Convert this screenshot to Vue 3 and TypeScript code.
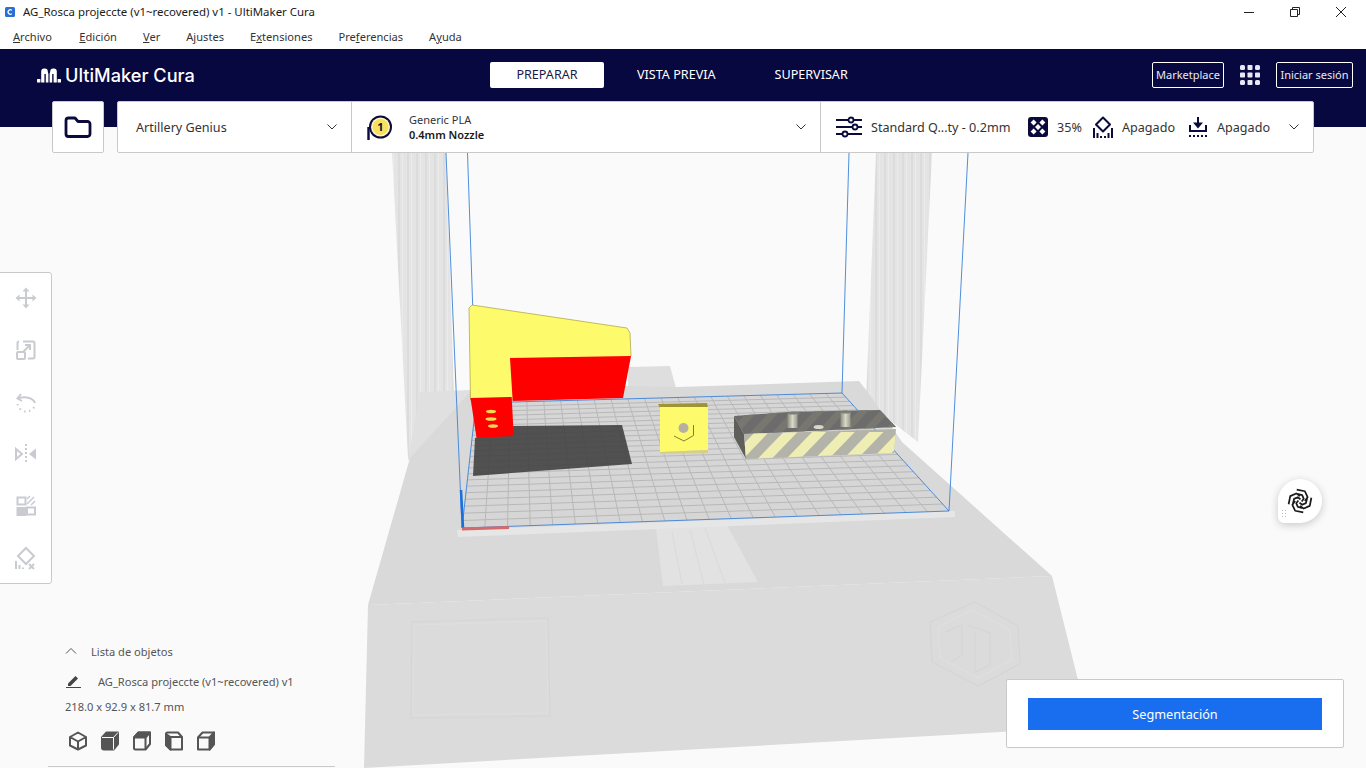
<script setup lang="ts">
// UltiMaker Cura "Preparar" stage: window chrome, toolbars and a fake 3D build plate.

type Pt = [number, number]

const menus = [
  { pre: '', key: 'A', post: 'rchivo' },
  { pre: '', key: 'E', post: 'dición' },
  { pre: '', key: 'V', post: 'er' },
  { pre: 'A', key: 'j', post: 'ustes' },
  { pre: 'E', key: 'x', post: 'tensiones' },
  { pre: 'Pre', key: 'f', post: 'erencias' },
  { pre: 'A', key: 'y', post: 'uda' },
]

// bed corners on screen: back-left, back-right, front-right, front-left
const bed: Pt[] = [
  [476, 403],
  [842, 393],
  [949, 511],
  [462, 528],
]

function project(u: number, v: number): Pt {
  const [[x0, y0], [x1, y1], [x2, y2], [x3, y3]] = bed
  const dx1 = x1 - x2
  const dx2 = x3 - x2
  const sx = x0 - x1 + x2 - x3
  const dy1 = y1 - y2
  const dy2 = y3 - y2
  const sy = y0 - y1 + y2 - y3
  const den = dx1 * dy2 - dx2 * dy1
  const g = (sx * dy2 - dx2 * sy) / den
  const h = (dx1 * sy - sx * dy1) / den
  const w = g * u + h * v + 1
  return [
    ((x1 - x0 + g * x1) * u + (x3 - x0 + h * x3) * v + x0) / w,
    ((y1 - y0 + g * y1) * u + (y3 - y0 + h * y3) * v + y0) / w,
  ]
}

const cells = 22
const gridLines: string[] = []
for (let i = 1; i < cells; i++) {
  const t = i / cells
  const a = project(t, 0)
  const b = project(t, 1)
  const c = project(0, t)
  const d = project(1, t)
  gridLines.push(`M${a[0].toFixed(1)} ${a[1].toFixed(1)}L${b[0].toFixed(1)} ${b[1].toFixed(1)}`)
  gridLines.push(`M${c[0].toFixed(1)} ${c[1].toFixed(1)}L${d[0].toFixed(1)} ${d[1].toFixed(1)}`)
}
const gridPath = gridLines.join('')
const bedPoints = bed.map((p) => p.join(',')).join(' ')

const frontStripes: string[] = []
for (let i = 0; i < 7; i++) {
  const x = 727 + i * 28.6
  frontStripes.push(`${x},461 ${x + 14},461 ${x + 42},432 ${x + 28},432`)
}
const topStripes: string[] = []
for (let i = 0; i < 9; i++) {
  const x = 725 + i * 22
  topStripes.push(`${x},436 ${x + 10},436 ${x + 36},408 ${x + 26},408`)
}
const swirl = [0, 90, 180, 270]
</script>

<template>
  <div class="app">
    <div class="titlebar">
      <svg class="app-icon" viewBox="0 0 10 10">
        <rect width="10" height="10" rx="1.5" fill="#2b6fd6" />
        <path d="M6.8 3.4A2.2 2.2 0 1 0 6.8 6.6" fill="none" stroke="#fff" stroke-width="1.2" />
      </svg>
      <span class="title">AG_Rosca projeccte (v1~recovered) v1 - UltiMaker Cura</span>
      <div class="winbtns">
        <svg width="12" height="12" viewBox="0 0 12 12"><path d="M1 6.5h10" stroke="#222" /></svg>
        <svg width="12" height="12" viewBox="0 0 12 12"><path d="M1.5 3.5h7v7h-7zM3.5 3.5v-2h7v7h-2" fill="none" stroke="#222" /></svg>
        <svg width="12" height="12" viewBox="0 0 12 12"><path d="M1 1l10 10M11 1L1 11" stroke="#222" /></svg>
      </div>
    </div>

    <nav class="menubar">
      <span v-for="m in menus" :key="m.post">{{ m.pre }}<u>{{ m.key }}</u>{{ m.post }}</span>
    </nav>

    <header class="header">
      <div class="topnav">
        <div class="brand">
          <svg width="24" height="15" viewBox="0 0 24 15" fill="#fff">
            <rect x="0" y="11" width="3.4" height="3.6" rx=".6" />
            <rect x="20.6" y="11" width="3.4" height="3.6" rx=".6" />
            <path d="M4.2 14.6V3.4A3 3 0 0 1 7.2.4h.6a3 3 0 0 1 3 3l.6 2.6V14.600H8.800V6H7.400V14.600z" />
            <path d="M12.600 14.600V6l.6-2.600a3 3 0 0 1 3-3h.6a3 3 0 0 1 3 3V14.600H16.600V6H15.200V14.600z" />
          </svg>
          <span>UltiMaker Cura</span>
        </div>
        <div class="tabs">
          <span class="tab active">PREPARAR</span>
          <span class="tab">VISTA PREVIA</span>
          <span class="tab">SUPERVISAR</span>
        </div>
        <div class="account">
          <span class="outline-btn market">Marketplace</span>
          <svg class="apps" width="20" height="20" viewBox="0 0 20 20" fill="#e8e8f4">
            <rect x="0" y="0" width="5" height="5" rx="1.6" />
            <rect x="7.5" y="0" width="5" height="5" rx=".8" />
            <rect x="15" y="0" width="5" height="5" rx="1.6" />
            <rect x="0" y="7.5" width="5" height="5" rx=".8" />
            <rect x="7.5" y="7.5" width="5" height="5" rx=".8" />
            <rect x="15" y="7.5" width="5" height="5" rx=".8" />
            <rect x="0" y="15" width="5" height="5" rx="1.6" />
            <rect x="7.5" y="15" width="5" height="5" rx=".8" />
            <rect x="15" y="15" width="5" height="5" rx="1.6" />
          </svg>
          <span class="outline-btn login">Iniciar sesión</span>
        </div>
      </div>

      <div class="toolrow">
        <div class="folder">
          <svg width="28" height="22" viewBox="0 0 28 22">
            <path d="M2 4.5A2.5 2.5 0 0 1 4.5 2h6.500l3 3.500h9.500A2.5 2.5 0 0 1 26 8v10a2.5 2.5 0 0 1-2.500 2.500h-19A2.5 2.5 0 0 1 2 18z" fill="none" stroke="#0a0a3c" stroke-width="2.8" stroke-linejoin="round" />
          </svg>
        </div>
        <div class="mainbar">
          <div class="section printer">
            <span>Artillery Genius</span>
            <svg class="chev" width="12" height="8" viewBox="0 0 12 8"><path d="M1.5 1.5L6 6l4.500-4.500" fill="none" stroke="#333" /></svg>
          </div>
          <div class="section material">
            <svg width="28" height="28" viewBox="0 0 28 28">
              <path d="M2.5 27V14" stroke="#0a0a3c" stroke-width="2.4" />
              <circle cx="14.5" cy="14" r="11.5" fill="#0a0a3c" />
              <circle cx="14.5" cy="14" r="9.5" fill="#fff6c4" />
              <circle cx="14.5" cy="14" r="8" fill="#f7e25e" />
              <text x="14.5" y="18" text-anchor="middle" class="nozzle-num">1</text>
            </svg>
            <div class="mat-text">
              <span>Generic PLA</span>
              <strong>0.4mm Nozzle</strong>
            </div>
            <svg class="chev" width="12" height="8" viewBox="0 0 12 8"><path d="M1.5 1.5L6 6l4.500-4.500" fill="none" stroke="#333" /></svg>
          </div>
          <div class="section settings">
            <svg width="26" height="22" viewBox="0 0 26 22" fill="none" stroke="#0a0a3c" stroke-width="1.8">
              <path d="M0 4h12M18 4h8M0 11h16M22 11h4M0 18h6M12 18h14" />
              <circle cx="15" cy="4" r="2.5" />
              <circle cx="19" cy="11" r="2.5" />
              <circle cx="9" cy="18" r="2.5" />
            </svg>
            <span class="profile">Standard Q...ty - 0.2mm</span>
            <svg class="infill" width="20" height="20" viewBox="0 0 20 20">
              <rect width="20" height="20" rx="3" fill="#0a0a3c" />
              <path d="M10 7l3 3-3 3-3-3zM5.600 2.600l3 3-3 3-3-3zM14.400 2.600l3 3-3 3-3-3zM5.600 11.400l3 3-3 3-3-3zM14.400 11.400l3 3-3 3-3-3z" fill="#fff" />
            </svg>
            <span class="pct">35%</span>
            <svg class="support" width="20" height="22" viewBox="0 0 20 22" fill="none" stroke="#0a0a3c" stroke-width="2">
              <path d="M10 1.500L17 8.500 10 15.500 3 8.500z" stroke-linejoin="round" />
              <path d="M1 22v-10M4.500 22v-5M8 22v-2M12 22v-2M15.500 22v-5M19 22v-10" />
            </svg>
            <span class="off">Apagado</span>
            <svg class="adhesion" width="20" height="22" viewBox="0 0 20 22" fill="none" stroke="#0a0a3c" stroke-width="2">
              <path d="M10 1v8" />
              <path d="M5 6.500h10L10 12.500z" fill="#0a0a3c" stroke="none" />
              <path d="M2 9v6h16V9" />
              <path d="M1 20h18" stroke-dasharray="2 2" />
            </svg>
            <span class="off">Apagado</span>
            <svg class="chev" width="12" height="8" viewBox="0 0 12 8"><path d="M1.5 1.5L6 6l4.500-4.500" fill="none" stroke="#333" /></svg>
          </div>
        </div>
      </div>
    </header>

    <main class="stage">
      <svg class="scene" viewBox="0 127 1366 641" width="1366" height="641">
        <defs>
          <pattern id="ribs" width="9" height="10" patternUnits="userSpaceOnUse">
            <rect width="9" height="10" fill="#e4e4e4" />
            <rect x="2" width="2" height="10" fill="#dcdcdc" />
            <rect x="6" width="1" height="10" fill="#ebebeb" />
          </pattern>
          <clipPath id="boxFront"><polygon points="744,434 896,429 894,453 746,459" /></clipPath>
          <clipPath id="boxTop"><polygon points="734,416 788,412 880,410 896,427 744,434" /></clipPath>
          <linearGradient id="peg" x1="0" x2="1" y1="0" y2="0">
            <stop offset="0" stop-color="#8d8d84" />
            <stop offset=".5" stop-color="#d9d9c4" />
            <stop offset="1" stop-color="#9a9a90" />
          </linearGradient>
        </defs>

        <!-- printer frame -->
        <polygon points="392,153 446,153 456,458 408,458" fill="url(#ribs)" />
        <polygon points="876,153 932,153 918,442 866,402" fill="url(#ribs)" />
        <polygon points="420,392 470,390 470,458 408,460" fill="#e0e0e0" />
        <polygon points="628,367 670,366 676,388 628,390" fill="#dedede" />
        <polygon points="470,392 627,386 677,387 859,381 870,395 902,442 1052,576 368,605 410,458" fill="#d9d9d9" />
        <polygon points="368,605 1052,576 1078,680 1090,727 364,768" fill="#dbdbdb" />
        <polygon points="656,528 727,525 758,582 663,586" fill="#e2e2e2" />
        <path d="M672 532l10 52M690 530l14 54M705 528l20 55" stroke="#dadada" stroke-width="1" fill="none" />
        <path d="M412 622L548 618L550 716L411 718Z" fill="none" stroke="#d5d5d5" />
        <path d="M414 625L546 621L548 713L413 715Z" fill="none" stroke="#dfdfdf" />
        <g fill="none" stroke="#d5d5d5" stroke-width="1.2">
          <path d="M975 602L1018 626L1020 664L978 686L932 662L930 622Z" />
          <path d="M972 610L1010 630L1012 660L978 678L940 658L938 627Z" stroke="#dfdfdf" />
          <path d="M946 632L962 625V655L951 662M968 625L990 633V665L975 672V632" />
        </g>

        <!-- bed -->
        <polygon points="457,530 955,511 955,517 458,537" fill="#e6e6e6" />
        <polygon :points="bedPoints" fill="#d6d6d6" />
        <path :d="gridPath" stroke="#b8b8b8" stroke-width="1" fill="none" />
        <polygon points="475,438 513,426 622,425 632,464 473,476" fill="#3f3f3f" fill-opacity=".88" />

        <!-- build volume -->
        <g stroke="#3b82d9" stroke-width=".9" fill="none">
          <path d="M446 153L462 528L949 511L968 153" />
          <path d="M467.5 153L476 403L842 393L849 153" />
          <path d="M842 393L949 511M476 403L462 528" />
        </g>
        <path d="M461 490L463 528" stroke="#1a6fdc" stroke-width="2.5" />
        <path d="M462 529L509 527.5" stroke="#d46a6a" stroke-width="3" />

        <!-- yellow and red part -->
        <polygon points="469,308 472,305 627,328 630,333 631,356 510,400 470.5,400" fill="#fdfb6b" stroke="#9a8f30" stroke-width=".6" />
        <polygon points="510,358 631,356 623,398 512.7,401" fill="#fe0000" />
        <polygon points="470.5,398 511.7,397 513.7,436 476.5,437.7" fill="#fe0000" />
        <ellipse cx="491" cy="411.5" rx="5" ry="1.8" fill="#f7d855" />
        <ellipse cx="491" cy="419" rx="5.5" ry="1.8" fill="#f7d855" />
        <ellipse cx="493" cy="426" rx="5" ry="1.8" fill="#f7d855" />

        <!-- yellow cube -->
        <polygon points="658,404 707,403 708,408 660,408" fill="#9f9430" />
        <polygon points="660,407 708,407 708,450 660,452" fill="#fdfb6b" />
        <polygon points="660,452 708,450 708,453 660,454" fill="#d8cf86" />
        <circle cx="683.5" cy="428" r="5" fill="#b5b1a0" />
        <path d="M674 436L684 441L693.5 435.5V425" fill="none" stroke="#85802c" />

        <!-- striped box -->
        <polygon points="734,416 744,434 746,459 734,437" fill="#5f5f5a" />
        <polygon points="734,416 788,412 880,410 896,427 744,434" fill="#6c6c6c" />
        <g clip-path="url(#boxTop)">
          <polygon v-for="s in topStripes" :key="s" :points="s" fill="#777770" />
        </g>
        <polygon points="744,434 896,429 894,453 746,459" fill="#b3b3aa" />
        <g clip-path="url(#boxFront)">
          <polygon v-for="s in frontStripes" :key="s" :points="s" fill="#eeeeb4" />
        </g>
        <rect x="787.5" y="413" width="10" height="15" fill="url(#peg)" />
        <ellipse cx="792.5" cy="413" rx="5" ry="1.5" fill="#7d7d78" />
        <rect x="840.5" y="412" width="10" height="15" fill="url(#peg)" />
        <ellipse cx="845.5" cy="412" rx="5" ry="1.5" fill="#7d7d78" />
        <ellipse cx="818.6" cy="427" rx="5" ry="2" fill="#d8d8c8" />
      </svg>

      <aside class="tools">
        <svg width="24" height="24" viewBox="0 0 24 24" fill="none" stroke="#c9cbd1" stroke-width="2">
          <path d="M12 3v18M3 12h18" />
          <path d="M12 1.5l3.500 4h-7zM12 22.500l3.500-4h-7zM1.500 12l4-3.500v7zM22.500 12l-4-3.500v7z" fill="#c9cbd1" stroke="none" />
        </svg>
        <svg width="24" height="24" viewBox="0 0 24 24" fill="none" stroke="#c9cbd1" stroke-width="2">
          <path d="M9 3.500h10A1.5 1.5 0 0 1 20.500 5v14a1.5 1.5 0 0 1-1.500 1.500h-5M3.500 12V5A1.5 1.5 0 0 1 5 3.500" />
          <rect x="3" y="14" width="8" height="7" rx="1" />
          <path d="M9 14l7-7M11 7h5v5" />
        </svg>
        <svg width="24" height="24" viewBox="0 0 24 24" fill="none" stroke="#c9cbd1" stroke-width="2">
          <path d="M7 4L3.500 8.500L8 11" />
          <path d="M4 8.500C11 6 19 7.500 21 13" />
          <path d="M3.500 14a9 9 0 0 0 17.500 1" stroke-dasharray="1.5 3.5" />
        </svg>
        <svg width="24" height="24" viewBox="0 0 24 24" fill="none" stroke="#c9cbd1" stroke-width="2">
          <path d="M12 2v20" stroke-dasharray="2 2" />
          <path d="M2 7l6 5-6 5z" />
          <path d="M22 6.500l-7 5.500 7 5.500z" fill="#c9cbd1" stroke="none" />
        </svg>
        <svg width="24" height="24" viewBox="0 0 24 24" fill="none" stroke="#c9cbd1" stroke-width="2">
          <rect x="3.5" y="3.5" width="8" height="7" />
          <rect x="13" y="13.5" width="8" height="7" />
          <rect x="2.5" y="13" width="10" height="9" fill="#c9cbd1" stroke="none" />
          <path d="M13 10l7-7M17 11l4-4M13 5l3-3" stroke-width="1.5" />
        </svg>
        <svg width="24" height="24" viewBox="0 0 24 24" fill="none" stroke="#c9cbd1" stroke-width="2">
          <path d="M12 2l8 8-8 8-8-8z" />
          <path d="M2 23v-8M5.500 23v-4M9 23v-1.500" />
          <path d="M15 18l5 5M20 18l-5 5" />
        </svg>
      </aside>

      <section class="objects">
        <div class="obj-head">
          <svg width="12" height="8" viewBox="0 0 12 8"><path d="M1 6.5L6 1.5l5 5" fill="none" stroke="#555" /></svg>
          <span>Lista de objetos</span>
        </div>
        <div class="obj-name">
          <svg width="15" height="14" viewBox="0 0 15 14">
            <path d="M2 9.500L9.500 2l2.500 2.500L4.500 12H2z" fill="#444" />
            <path d="M0 13.500h15" stroke="#444" />
          </svg>
          <span>AG_Rosca projeccte (v1~recovered) v1</span>
        </div>
        <div class="obj-size">218.0 x 92.9 x 81.7 mm</div>
        <div class="views">
          <svg width="20" height="20" viewBox="0 0 20 20" fill="none" stroke="#555" stroke-width="2" stroke-linejoin="round">
            <path d="M10 1.500l8 4.500v8.500l-8 4-8-4V6zM2 6l8 4.500 8-4.500M10 10.500V18.500" />
          </svg>
          <svg width="20" height="20" viewBox="0 0 20 20" fill="none" stroke="#555" stroke-width="2" stroke-linejoin="round">
            <path d="M2 6.500l4.500-5H18V13l-4.500 5.500H4a2 2 0 0 1-2-2z" fill="#555" />
            <path d="M2 6.500h11.500V18.500M13.500 6.500L18 1.500" stroke="#fafafa" stroke-width="1" />
          </svg>
          <svg width="20" height="20" viewBox="0 0 20 20" fill="none" stroke="#555" stroke-width="2" stroke-linejoin="round">
            <path d="M2 6.500l4.500-5H18V13l-4.500 5.500H3.500A1.5 1.5 0 0 1 2 17z" />
            <path d="M2 6.500l4.500-5H18l-4.500 5z" fill="#555" />
            <path d="M13.500 6.500V18.500" />
          </svg>
          <svg width="20" height="20" viewBox="0 0 20 20" fill="none" stroke="#555" stroke-width="2" stroke-linejoin="round">
            <path d="M2 3A1.5 1.5 0 0 1 3.500 1.500H14L18 6v12.500H6.500L2 14z" />
            <path d="M2 3v11l4.500 4.500V6z" fill="#555" />
            <path d="M6.500 6H18" />
          </svg>
          <svg width="20" height="20" viewBox="0 0 20 20" fill="none" stroke="#555" stroke-width="2" stroke-linejoin="round">
            <path d="M2 6.500l4.500-5H18V13l-4.500 5.500H2z" />
            <path d="M13.500 6.500L18 1.500V13l-4.500 5.500z" fill="#555" />
            <path d="M2 6.500h11.500" />
          </svg>
        </div>
      </section>
      <div class="bottom-line"></div>

      <div class="assistant">
        <svg width="26" height="26" viewBox="0 0 24 24" fill="none" stroke="#1a1a1a" stroke-width="1.6" stroke-linejoin="round">
          <g v-for="r in swirl" :key="r" :transform="`rotate(${r} 12 12)`">
            <path d="M9 1.500L16.500 3 19 8.500 16.500 12" />
            <path d="M9.500 5.500L14 6.500 15.500 10 13.500 12.500" />
          </g>
        </svg>
        <span class="grip"></span>
      </div>

      <div class="action">
        <button type="button">Segmentación</button>
      </div>
    </main>
  </div>
</template>

<style>
html,
body {
  margin: 0;
  background: #fafafa;
}
</style>

<style scoped>
.app {
  display: flex;
  flex-direction: column;
  width: 1366px;
  height: 768px;
  overflow: hidden;
  font-family: "Noto Sans", "Open Sans", sans-serif;
  color: #1a1a1a;
  background: #fafafa;
}

/* window chrome */
.titlebar {
  display: flex;
  align-items: center;
  height: 23px;
  background: #fff;
  padding-left: 5px;
  font-size: 11.45px;
}
.app-icon {
  width: 10px;
  height: 10px;
  margin-right: 8px;
}
.title {
  flex: 1;
}
.winbtns {
  display: flex;
  gap: 34px;
  padding-right: 19px;
}
.menubar {
  display: flex;
  align-items: center;
  gap: 26px;
  height: 26px;
  padding-left: 13px;
  background: #fff;
  font-size: 11.1px;
  color: #333;
}
.menubar span:first-child {
  margin-right: 1.5px;
}

/* dark header */
.header {
  height: 78px;
  background: #080840;
  position: relative;
  z-index: 2;
}
.topnav {
  display: flex;
  align-items: center;
  height: 52px;
}
.brand {
  display: flex;
  align-items: center;
  gap: 4px;
  width: 490px;
  padding-left: 37px;
  box-sizing: border-box;
  color: #fff;
  font-family: Inter, "Liberation Sans", sans-serif;
  font-size: 18.2px;
  font-weight: 500;
}
.tabs {
  display: flex;
  font-size: 12.6px;
  color: #fff;
  width: 662px;
}
.tab {
  height: 26px;
  line-height: 26px;
  text-align: center;
  padding: 0 26px;
  margin-left: 7px;
}
.tab.active {
  background: #fff;
  color: #1a1a4a;
  border-radius: 2px;
  width: 62px;
  margin-left: 0;
}
.account {
  display: flex;
  align-items: center;
}
.outline-btn {
  height: 24px;
  line-height: 24px;
  border: 1px solid #fff;
  border-radius: 2px;
  text-align: center;
  color: #e8e8f4;
  font-size: 11px;
}
.market {
  width: 70px;
}
.apps {
  margin: 0 16px;
}
.login {
  width: 75px;
}
.toolrow {
  display: flex;
  gap: 13px;
  height: 52px;
  padding-left: 52px;
}
.folder,
.mainbar {
  background: #fff;
  border: 1px solid #c9c9c9;
  border-radius: 2px;
  box-sizing: border-box;
  height: 52px;
}
.folder {
  display: flex;
  align-items: center;
  justify-content: center;
  width: 52px;
}
.mainbar {
  display: flex;
  width: 1197px;
}
.section {
  display: flex;
  align-items: center;
  box-sizing: border-box;
  font-size: 12.6px;
  color: #333;
}
.printer {
  width: 234px;
  padding: 0 13px 0 18px;
  justify-content: space-between;
  border-right: 1px solid #c9c9c9;
}
.material {
  width: 469px;
  padding: 0 13px 0 14px;
  border-right: 1px solid #c9c9c9;
}
.material .chev {
  margin-left: auto;
}
.mat-text {
  display: flex;
  flex-direction: column;
  margin-left: 15px;
  font-size: 11px;
  line-height: 15px;
}
.mat-text strong {
  font-weight: 600;
  color: #1a1a1a;
}
.nozzle-num {
  font-family: "Noto Sans", sans-serif;
  font-size: 11px;
  font-weight: 700;
  fill: #0a0a3c;
}
.settings {
  flex: 1;
  padding-left: 15px;
}
.profile {
  margin-left: 9px;
  width: 157px;
}
.pct {
  margin-left: 9px;
  width: 36px;
}
.off {
  margin-left: 9px;
  width: 66px;
}
.settings .chev {
  margin-left: 5px;
}

/* canvas */
.stage {
  position: relative;
  flex: 1;
}
.scene {
  position: absolute;
  inset: 0;
  display: block;
}
.tools {
  position: absolute;
  left: -1px;
  top: 145px;
  width: 53px;
  height: 312px;
  box-sizing: border-box;
  display: flex;
  flex-direction: column;
  align-items: center;
  justify-content: space-between;
  padding: 13px 0;
  background: #fff;
  border: 1px solid #c9c9c9;
  border-radius: 0 3px 3px 0;
}
.objects {
  position: absolute;
  left: 65px;
  top: 515px;
  font-size: 11.1px;
  color: #555;
}
.obj-head {
  display: flex;
  align-items: center;
  gap: 14px;
  height: 18px;
}
.obj-name {
  display: flex;
  align-items: center;
  gap: 17px;
  height: 18px;
  margin-top: 12px;
  padding-left: 1px;
}
.obj-size {
  margin-top: 8px;
  height: 18px;
  line-height: 18px;
}
.views {
  display: flex;
  gap: 12px;
  margin-top: 15px;
  padding-left: 3px;
}
.bottom-line {
  position: absolute;
  left: 48px;
  top: 639px;
  width: 287px;
  height: 1px;
  background: #c9c9c9;
}
.assistant {
  position: absolute;
  left: 1278px;
  top: 352px;
  width: 44px;
  height: 44px;
  display: flex;
  align-items: center;
  justify-content: center;
  background: #fff;
  border-radius: 50% 50% 50% 6px;
  box-shadow: 0 2px 8px rgba(0, 0, 0, 0.2);
}
.grip {
  position: absolute;
  left: 3px;
  bottom: 5px;
  width: 6px;
  height: 9px;
  background: radial-gradient(circle, #bbb 1px, transparent 1px) 0 0 / 3px 3px;
}
.action {
  position: absolute;
  left: 1006px;
  top: 552px;
  width: 338px;
  height: 69px;
  box-sizing: border-box;
  padding: 18px 21px;
  background: #fff;
  border: 1px solid #c9c9c9;
  border-radius: 2px;
}
.action button {
  display: block;
  width: 294px;
  height: 32px;
  border: 0;
  background: #196ef0;
  color: #fff;
  font: 12.7px "Noto Sans", sans-serif;
}
</style>
